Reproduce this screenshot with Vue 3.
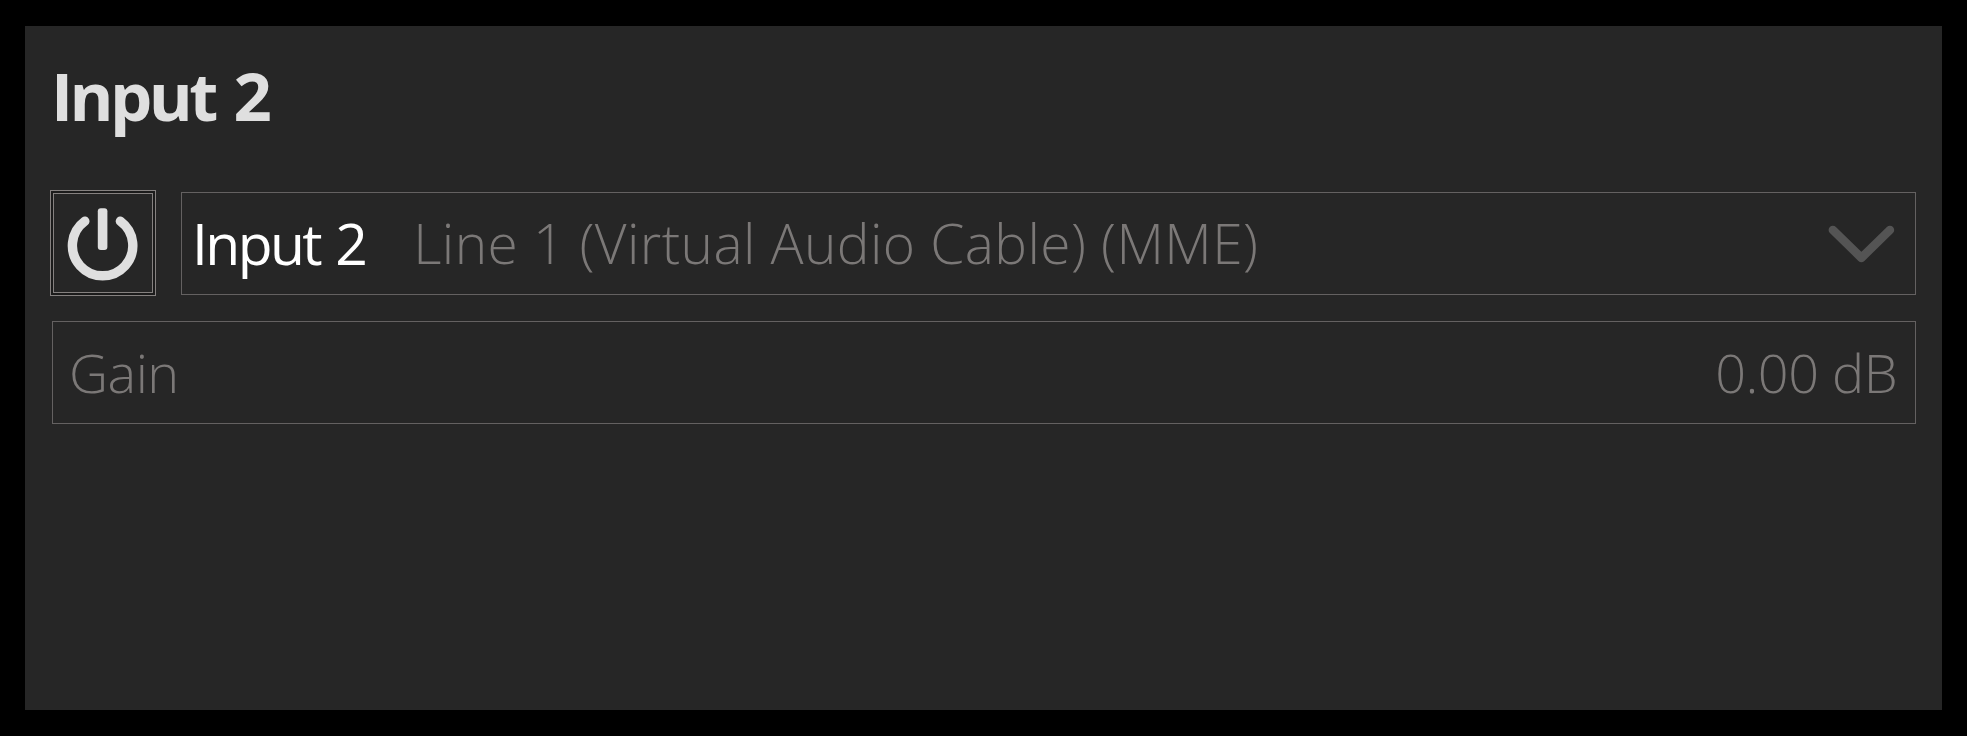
<template>
  <div class="screen">
    <section class="panel">
      <h1 class="title">{{ input.name }}</h1>

      <div class="row">
        <button class="power" type="button" aria-label="Power" @click="enabled = !enabled">
          <span class="power-inner">
            <svg width="73" height="76" viewBox="0 0 73 76" fill="none" stroke="#dfdfdf" stroke-linecap="round">
              <path d="M17.8 16.2A30.2 30.2 0 1 0 53.4 16.2" stroke-width="9.4" />
              <rect x="30.8" y="3.2" width="9.6" height="41.8" rx="3" fill="#dfdfdf" stroke="none" />
            </svg>
          </span>
        </button>

        <div class="box device">
          <span class="name">{{ input.name }}</span>
          <span class="source">{{ input.source }}</span>
          <svg class="chevron" width="68" height="40" viewBox="0 0 68 40" fill="none">
            <path d="M5.9 6L34.4 33.8L62.9 6" stroke="#545454" stroke-width="8.6" stroke-linecap="round" stroke-linejoin="round" />
          </svg>
        </div>
      </div>

      <div class="box gain">
        <span class="label">Gain</span>
        <span class="value">{{ gainText }}</span>
      </div>
    </section>
  </div>
</template>

<script setup>
import { ref, computed } from 'vue'

const input = { name: 'Input 2', source: 'Line 1 (Virtual Audio Cable) (MME)' }
const enabled = ref(true)
const gain = ref(0)

const gainText = computed(() => `${gain.value.toFixed(2)} dB`)
</script>

<style>
body {
  margin: 0;
  background: #000;
}
</style>

<style scoped>
.screen {
  box-sizing: border-box;
  width: 1967px;
  height: 736px;
  padding: 26px 25px;
  background: #000;
  font-family: "Open Sans", "Noto Sans", sans-serif;
}
.panel {
  box-sizing: border-box;
  height: 684px;
  padding: 22px 25px 0;
  background: #262626;
}
.title {
  height: 94px;
  margin: 0 0 48px;
  padding-left: 1px;
  font-size: 67px;
  line-height: 94px;
  font-weight: 700;
  letter-spacing: -3.6px;
  word-spacing: 5px;
  color: #dfdfdf;
}
.row {
  display: flex;
  align-items: center;
  gap: 25px;
  height: 106px;
}
.power {
  box-sizing: border-box;
  width: 106px;
  height: 106px;
  padding: 2px;
  border: 1px solid #858180;
  background: #1b1b1b;
}
.power-inner {
  box-sizing: border-box;
  display: flex;
  align-items: center;
  justify-content: center;
  width: 100%;
  height: 100%;
  border: 1px solid #858180;
  background: #262626;
}
.box {
  box-sizing: border-box;
  display: flex;
  align-items: center;
  height: 103px;
  border: 1px solid #646161;
  white-space: pre;
}
.box span {
  padding-bottom: 2px;
}
.device {
  width: 1735px;
  margin-top: 1px;
  padding: 0 20px 0 10px;
}
.name {
  font-size: 57px;
  letter-spacing: -2.6px;
  word-spacing: 3px;
  color: #fff;
}
.source {
  margin-left: 48px;
  font-size: 55px;
  font-weight: 300;
  letter-spacing: 0.42px;
  color: #7b7877;
}
.chevron {
  margin-left: auto;
}
.gain {
  justify-content: space-between;
  width: 1864px;
  margin: 25px 0 0 2px;
  padding: 0 18px 0 16px;
  font-size: 54px;
  font-weight: 300;
  letter-spacing: -0.5px;
  color: #7b7877;
}
</style>
